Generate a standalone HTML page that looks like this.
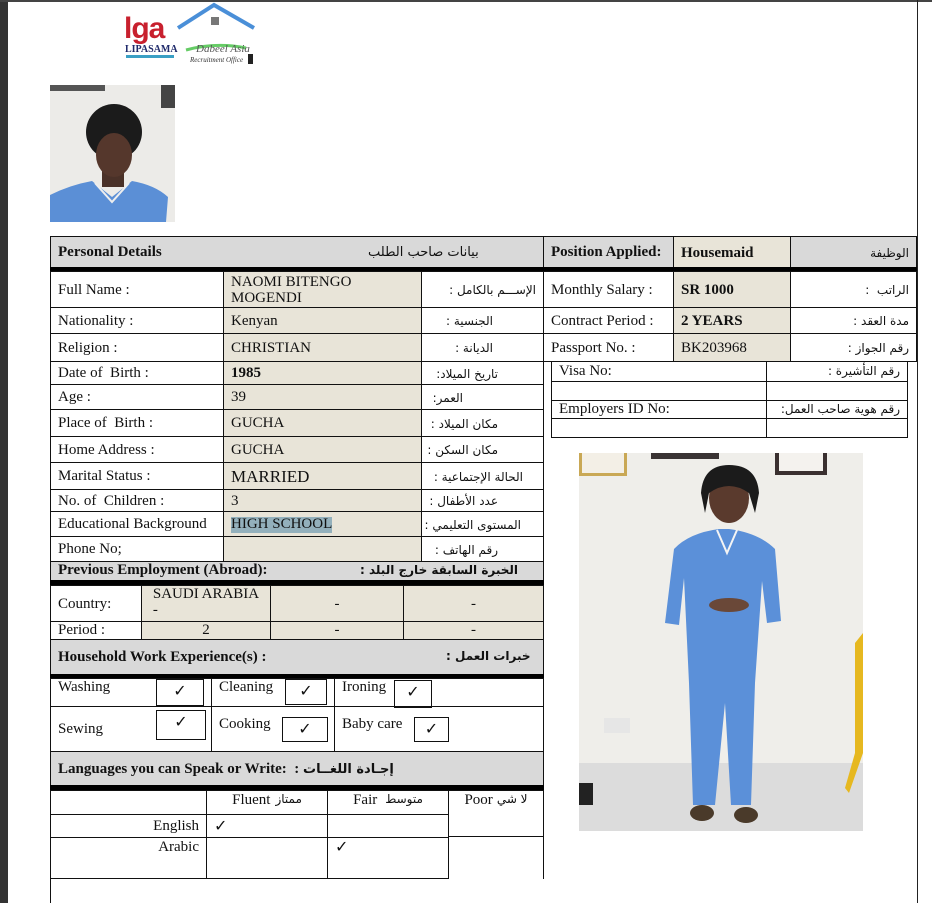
<!DOCTYPE html>
<html><head><meta charset="utf-8">
<style>
*{margin:0;padding:0;box-sizing:border-box}
body{width:932px;height:903px;background:#fff;position:relative;overflow:hidden;font-family:"Liberation Serif",serif;font-size:15px;color:#111}
.a{position:absolute;white-space:nowrap}
.c{position:absolute;border:1px solid #111;padding:2px 7px 0;display:flex;align-items:center;white-space:nowrap;line-height:1.05}
.g{background:#d9d9d9}
.b{background:#e8e4d8}
.bold{font-weight:bold}
.ar{font-family:"DejaVu Sans",sans-serif;font-size:12px;direction:rtl}
.k{position:absolute;height:5px;background:#000}
.x{position:absolute;border:1px solid #111;text-align:center;font-size:16px;line-height:24px}
.r{justify-content:flex-end}
.ct{justify-content:center}
</style></head><body>
<div class="a" style="left:0;top:0;width:8px;height:903px;background:#333"></div>
<div class="a" style="left:0;top:0;width:932px;height:2px;background:#444"></div>
<div class="a" style="left:917px;top:0;width:1px;height:903px;background:#222"></div>

<div class="a" style="left:124px;top:12px;font-family:'Liberation Sans',sans-serif;font-weight:bold;font-size:30px;color:#c8202e;letter-spacing:-1px">lga</div>
<div class="a" style="left:125px;top:44px;font-weight:bold;font-size:10px;color:#1f2a6b">LIPASAMA</div>
<div class="a" style="left:126px;top:55px;width:48px;height:3px;background:#3a9fc4"></div>
<svg class="a" style="left:176px;top:2px" width="80" height="68" viewBox="0 0 80 68">
<path d="M2 26 L38 3 L78 26" fill="none" stroke="#4a8fd8" stroke-width="4"/>
<rect x="35" y="15" width="8" height="8" fill="#777"/>
<path d="M10 48 Q40 40 70 46" stroke="#6c6" stroke-width="3" fill="none"/>
<text x="20" y="50" font-size="11" font-style="italic" fill="#555" font-family="Liberation Serif">Dabeel Asia</text>
<text x="14" y="60" font-size="7" font-style="italic" fill="#333" font-family="Liberation Serif">Recruitment Office</text>
<rect x="72" y="52" width="5" height="10" fill="#222"/>
</svg>

<svg class="a" style="left:50px;top:85px" width="125" height="137" viewBox="0 0 125 137">
<rect width="125" height="137" fill="#ecebe8"/>
<rect x="0" y="0" width="55" height="6" fill="#555"/>
<rect x="111" y="0" width="14" height="23" fill="#444"/>
<path d="M0 110 Q20 100 42 96 L62 112 L82 96 Q105 100 118 112 L116 137 L0 137Z" fill="#5b8fd6"/>
<path d="M45 98 L62 117 L79 98" stroke="#eee" stroke-width="2" fill="none"/>
<rect x="52" y="86" width="22" height="16" fill="#4a3128"/>
<ellipse cx="64" cy="47" rx="28" ry="28" fill="#1b1b1b"/>
<ellipse cx="64" cy="70" rx="18" ry="22" fill="#55372c"/>
</svg>

<div class="c g bold" style="left:50px;top:236px;width:494px;height:32px">Personal Details</div>
<div class="a ar" style="left:368px;top:245px;font-size:13px">بيانات صاحب الطلب</div>
<div class="k" style="left:50px;top:267px;width:494px"></div>

<div class="c" style="left:50px;top:271px;width:174px;height:37px">Full Name :</div>
<div class="c b" style="left:223px;top:271px;width:199px;height:37px;white-space:normal"><span style="width:140px">NAOMI BITENGO MOGENDI</span></div>
<div class="c ar" style="left:421px;top:271px;width:123px;height:37px">الإســـم بالكامل :</div>

<div class="c" style="left:50px;top:307px;width:174px;height:27px">Nationality :</div>
<div class="c b" style="left:223px;top:307px;width:199px;height:27px">Kenyan</div>
<div class="c ar" style="left:421px;top:307px;width:123px;height:27px;padding-right:50px">الجنسية :</div>

<div class="c" style="left:50px;top:333px;width:174px;height:29px">Religion :</div>
<div class="c b" style="left:223px;top:333px;width:199px;height:29px">CHRISTIAN</div>
<div class="c ar" style="left:421px;top:333px;width:123px;height:29px;padding-right:50px">الديانة :</div>

<div class="c" style="left:50px;top:361px;width:174px;height:24px">Date of&nbsp; Birth :</div>
<div class="c b bold" style="left:223px;top:361px;width:199px;height:24px">1985</div>
<div class="c ar" style="left:421px;top:361px;width:123px;height:24px;padding-right:45px">تاريخ الميلاد:</div>

<div class="c" style="left:50px;top:384px;width:174px;height:26px">Age :</div>
<div class="c b" style="left:223px;top:384px;width:199px;height:26px">39</div>
<div class="c ar" style="left:421px;top:384px;width:123px;height:26px;padding-right:80px">العمر:</div>

<div class="c" style="left:50px;top:409px;width:174px;height:28px">Place of&nbsp; Birth :</div>
<div class="c b" style="left:223px;top:409px;width:199px;height:28px">GUCHA</div>
<div class="c ar" style="left:421px;top:409px;width:123px;height:28px;padding-right:45px">مكان الميلاد :</div>

<div class="c" style="left:50px;top:436px;width:174px;height:27px">Home Address :</div>
<div class="c b" style="left:223px;top:436px;width:199px;height:27px">GUCHA</div>
<div class="c ar" style="left:421px;top:436px;width:123px;height:27px;padding-right:45px">مكان السكن :</div>

<div class="c" style="left:50px;top:462px;width:174px;height:28px">Marital Status :</div>
<div class="c b" style="left:223px;top:462px;width:199px;height:28px;font-size:17px">MARRIED</div>
<div class="c ar" style="left:421px;top:462px;width:123px;height:28px;padding-right:20px">الحالة الإجتماعية :</div>

<div class="c" style="left:50px;top:489px;width:174px;height:23px">No. of&nbsp; Children :</div>
<div class="c b" style="left:223px;top:489px;width:199px;height:23px">3</div>
<div class="c ar" style="left:421px;top:489px;width:123px;height:23px;padding-right:45px">عدد الأطفال :</div>

<div class="c" style="left:50px;top:511px;width:174px;height:26px">Educational Background</div>
<div class="c b" style="left:223px;top:511px;width:199px;height:26px"><span style="background:#93b0bc">HIGH SCHOOL</span></div>
<div class="c ar" style="left:421px;top:511px;width:123px;height:26px;padding-right:22px">المستوى التعليمي :</div>

<div class="c" style="left:50px;top:536px;width:174px;height:26px">Phone No;</div>
<div class="c b" style="left:223px;top:536px;width:199px;height:26px"></div>
<div class="c ar" style="left:421px;top:536px;width:123px;height:26px;padding-right:45px">رقم الهاتف :</div>

<div class="c g bold" style="left:50px;top:561px;width:494px;height:20px;padding-top:0">Previous Employment (Abroad):</div>
<div class="a ar" style="left:360px;top:563px;font-size:12px;font-weight:bold">الخبرة السابقة خارج البلد :</div>
<div class="k" style="left:50px;top:580px;width:494px"></div>
<div class="c" style="left:50px;top:585px;width:92px;height:37px">Country:</div>
<div class="c b" style="left:141px;top:585px;width:130px;height:37px;flex-direction:column;justify-content:flex-start;padding-top:1px">SAUDI ARABIA<br>-</div>
<div class="c b ct" style="left:270px;top:585px;width:134px;height:37px">-</div>
<div class="c b ct" style="left:403px;top:585px;width:141px;height:37px">-</div>
<div class="c" style="left:50px;top:621px;width:92px;height:19px;padding-top:0">Period :</div>
<div class="c b ct" style="left:141px;top:621px;width:130px;height:19px;padding-top:0">2</div>
<div class="c b ct" style="left:270px;top:621px;width:134px;height:19px;padding-top:0">-</div>
<div class="c b ct" style="left:403px;top:621px;width:141px;height:19px;padding-top:0">-</div>

<div class="c g bold" style="left:50px;top:639px;width:494px;height:36px">Household Work Experience(s) :</div>
<div class="a ar" style="left:446px;top:649px;font-size:12px;font-weight:bold">خبرات العمل :</div>
<div class="k" style="left:50px;top:674px;width:494px"></div>
<div class="c" style="left:50px;top:678px;width:162px;height:29px;align-items:flex-start;padding-top:1px">Washing</div>
<div class="c" style="left:211px;top:678px;width:124px;height:29px;align-items:flex-start;padding-top:1px">Cleaning</div>
<div class="c" style="left:334px;top:678px;width:210px;height:29px;align-items:flex-start;padding-top:1px">Ironing</div>
<div class="c" style="left:50px;top:706px;width:162px;height:46px">Sewing</div>
<div class="c" style="left:211px;top:706px;width:124px;height:46px;align-items:flex-start;padding-top:10px">Cooking</div>
<div class="c" style="left:334px;top:706px;width:210px;height:46px;align-items:flex-start;padding-top:10px">Baby care</div>
<div class="x" style="left:156px;top:679px;width:48px;height:27px">✓</div>
<div class="x" style="left:285px;top:679px;width:42px;height:26px">✓</div>
<div class="x" style="left:394px;top:680px;width:38px;height:28px">✓</div>
<div class="x" style="left:156px;top:710px;width:50px;height:30px">✓</div>
<div class="x" style="left:282px;top:717px;width:46px;height:25px">✓</div>
<div class="x" style="left:414px;top:717px;width:35px;height:25px">✓</div>

<div class="c g bold" style="left:50px;top:751px;width:494px;height:35px">Languages you can Speak or Write:&nbsp; :&nbsp;<span class="ar" style="font-size:13px">إجـادة اللغــات</span></div>
<div class="k" style="left:50px;top:785px;width:494px"></div>
<div class="c" style="left:50px;top:790px;width:157px;height:25px"></div>
<div class="c ct" style="left:206px;top:790px;width:122px;height:25px;align-items:flex-start;padding-top:2px">Fluent <span class="ar" style="margin-left:5px">ممتاز</span></div>
<div class="c ct" style="left:327px;top:790px;width:122px;height:25px;align-items:flex-start;padding-top:2px">Fair <span class="ar" style="margin-left:8px">متوسط</span></div>
<div class="c ct" style="left:448px;top:790px;width:96px;height:47px;align-items:flex-start;padding-top:2px">Poor <span class="ar" style="margin-left:4px">لا شي</span></div>
<div class="c r" style="left:50px;top:814px;width:157px;height:24px">English</div>
<div class="c" style="left:206px;top:814px;width:122px;height:24px;font-size:16px">✓</div>
<div class="c" style="left:327px;top:814px;width:122px;height:24px"></div>
<div class="c r" style="left:50px;top:837px;width:157px;height:42px;align-items:flex-start;padding-top:2px">Arabic</div>
<div class="c" style="left:206px;top:837px;width:122px;height:42px"></div>
<div class="c" style="left:327px;top:837px;width:122px;height:42px;align-items:flex-start;font-size:16px">✓</div>
<div class="a" style="left:543px;top:837px;width:1px;height:42px;background:#111"></div>
<div class="a" style="left:50px;top:878px;width:1px;height:25px;background:#111"></div>

<div class="c g bold" style="left:543px;top:236px;width:131px;height:32px">Position Applied:</div>
<div class="c b bold" style="left:673px;top:236px;width:118px;height:32px;border-bottom:none">Housemaid</div>
<div class="c g ar" style="left:790px;top:236px;width:127px;height:32px">الوظيفة</div>
<div class="k" style="left:543px;top:267px;width:374px"></div>
<div class="c" style="left:543px;top:271px;width:131px;height:37px">Monthly Salary :</div>
<div class="c b bold" style="left:673px;top:271px;width:118px;height:37px">SR 1000</div>
<div class="c ar" style="left:790px;top:271px;width:127px;height:37px">الراتب&nbsp; :</div>
<div class="c" style="left:543px;top:307px;width:131px;height:27px">Contract Period :</div>
<div class="c b bold" style="left:673px;top:307px;width:118px;height:27px">2 YEARS</div>
<div class="c ar" style="left:790px;top:307px;width:127px;height:27px">مدة العقد :</div>
<div class="c" style="left:543px;top:333px;width:131px;height:29px">Passport No. :</div>
<div class="c b" style="left:673px;top:333px;width:118px;height:29px">BK203968</div>
<div class="c ar" style="left:790px;top:333px;width:127px;height:29px">رقم الجواز :</div>

<div class="c" style="left:551px;top:361px;width:216px;height:21px;padding-top:0">Visa No:</div>
<div class="c ar" style="left:766px;top:361px;width:142px;height:21px;padding-top:0">رقم التأشيرة :</div>
<div class="c" style="left:551px;top:381px;width:216px;height:20px"></div>
<div class="c" style="left:766px;top:381px;width:142px;height:20px"></div>
<div class="c" style="left:551px;top:400px;width:216px;height:19px;padding-top:0">Employers ID No:</div>
<div class="c ar" style="left:766px;top:400px;width:142px;height:19px;padding-top:0">رقم هوية صاحب العمل:</div>
<div class="c" style="left:551px;top:418px;width:216px;height:20px"></div>
<div class="c" style="left:766px;top:418px;width:142px;height:20px"></div>

<svg class="a" style="left:579px;top:453px" width="284" height="378" viewBox="0 0 284 378">
<rect width="284" height="378" fill="#efeeea"/>
<rect x="0" y="310" width="284" height="68" fill="#dcdcdc"/>
<rect x="0" y="0" width="48" height="23" fill="#c9a855"/><rect x="3" y="0" width="42" height="20" fill="#f3efe6"/>
<rect x="72" y="0" width="68" height="6" fill="#3a3434"/>
<rect x="196" y="0" width="52" height="22" fill="#3a3030"/><rect x="200" y="0" width="44" height="18" fill="#f4f2ee"/>
<path d="M276 190 L284 180 L284 300 L270 340 L266 335 L276 300Z" fill="#e6b820"/>
<rect x="0" y="330" width="14" height="22" fill="#222"/>
<rect x="25" y="265" width="26" height="15" fill="#e6e6e6"/>
<path d="M140 76 Q110 80 95 96 L86 170 L100 172 L105 125 L110 230 L114 352 L136 352 L146 250 L152 352 L172 352 L176 230 L183 128 L188 170 L202 168 L196 96 Q180 80 150 76Z" fill="#5b90d9"/>
<path d="M138 77 L148 100 L158 77" stroke="#f4f4f4" stroke-width="2" fill="none"/>
<ellipse cx="150" cy="152" rx="20" ry="7" fill="#6a4838"/>
<ellipse cx="150" cy="45" rx="20" ry="25" fill="#5a3a2d"/>
<path d="M122 40 Q124 12 150 12 Q178 12 180 40 L176 60 L170 40 Q150 26 130 40 L126 60Z" fill="#1b1b1b"/>
<ellipse cx="123" cy="360" rx="12" ry="8" fill="#4a3a2a"/>
<ellipse cx="167" cy="362" rx="12" ry="8" fill="#4a3a2a"/>
</svg>
</body></html>
